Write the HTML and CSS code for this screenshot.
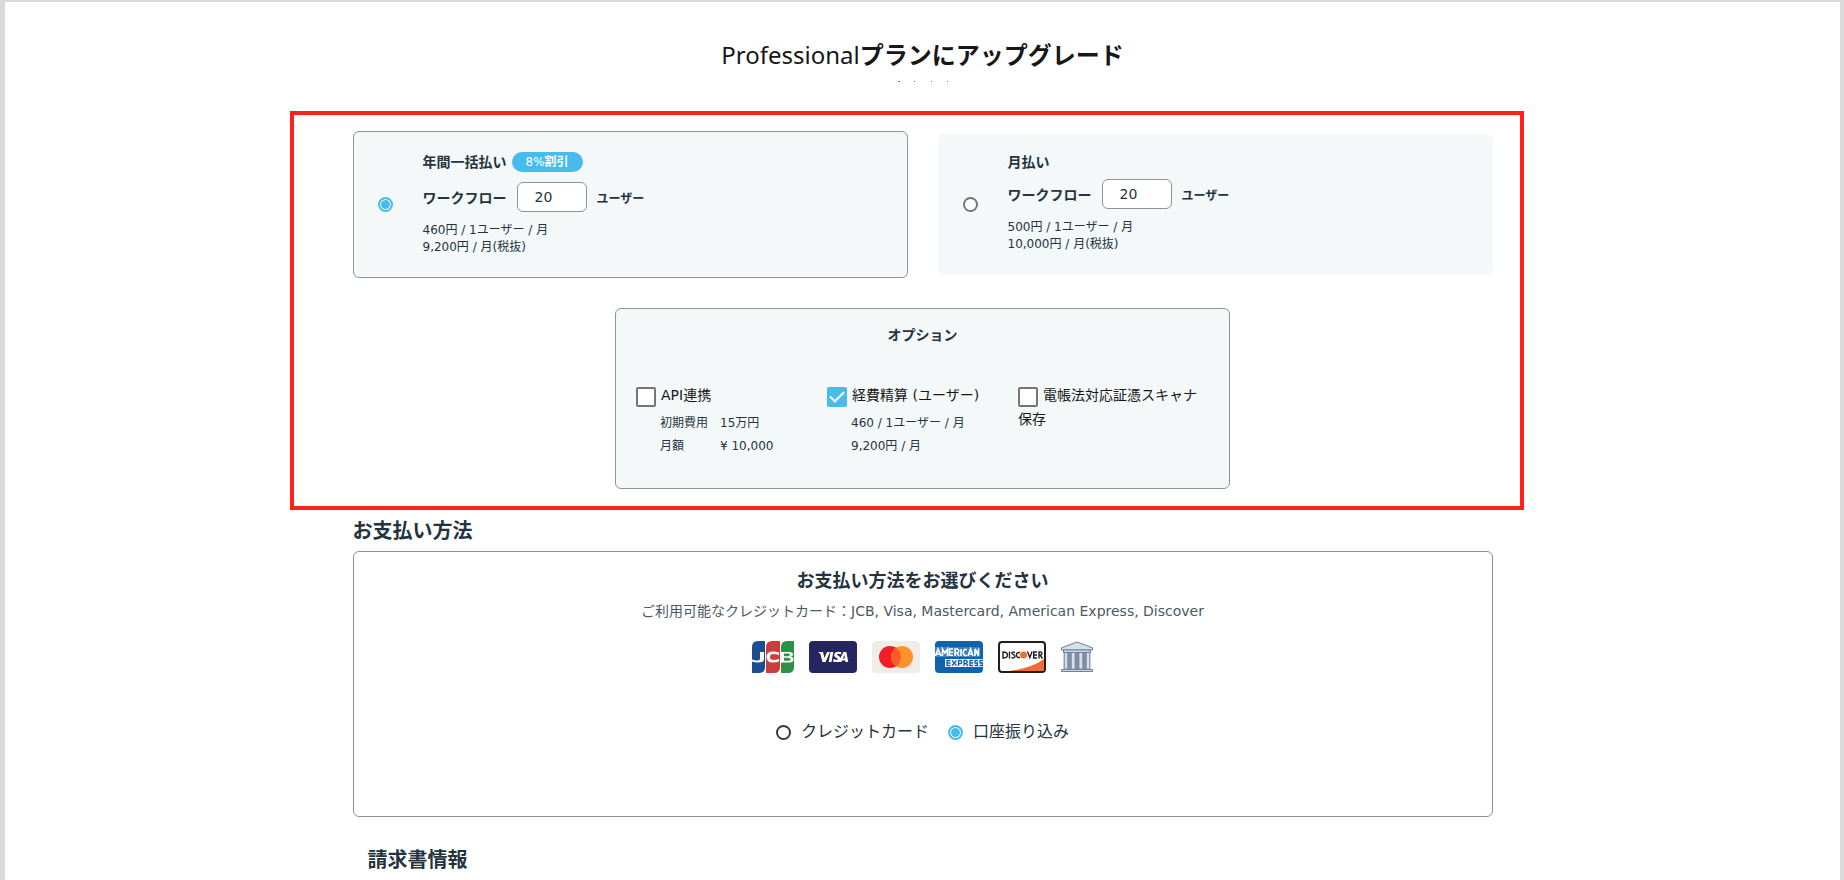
FILE: index.html
```html
<!DOCTYPE html>
<html lang="ja">
<head>
<meta charset="utf-8">
<title>Professionalプランにアップグレード</title>
<link rel="stylesheet" href="styles.css">
</head>
<body>
<main class="page">
  <form class="container">
    <h1 class="page-title"><span class="page-title-plan">Professional</span>プランにアップグレード</h1>
    <svg class="dots" width="50" height="2" viewBox="0 0 50 2" aria-hidden="true">
      <path d="M0 .5h2M16 .5h1M33 .5h1M49 .5h1" stroke="#777" stroke-width="1"/>
    </svg>

    <section class="plan-frame">
      <div class="plans">
        <div class="plan plan-selected">
          <input class="radio" type="radio" name="plan" id="plan-year" checked>
          <div class="plan-body">
            <div class="plan-name"><label for="plan-year">年間一括払い</label><span class="badge"><span class="badge-rate">8%</span>割引</span></div>
            <div class="plan-users">
              <label for="users-year">ワークフロー</label>
              <input class="count" type="text" id="users-year" value="20">
              <span class="unit">ユーザー</span>
            </div>
            <p class="price">460円 / 1ユーザー / 月<br>9,200円 / 月(税抜)</p>
          </div>
        </div>
        <div class="plan">
          <input class="radio" type="radio" name="plan" id="plan-month">
          <div class="plan-body">
            <div class="plan-name"><label for="plan-month">月払い</label></div>
            <div class="plan-users">
              <label for="users-month">ワークフロー</label>
              <input class="count" type="text" id="users-month" value="20">
              <span class="unit">ユーザー</span>
            </div>
            <p class="price">500円 / 1ユーザー / 月<br>10,000円 / 月(税抜)</p>
          </div>
        </div>
      </div>

      <div class="options">
        <h2 class="options-title">オプション</h2>
        <div class="options-grid">
          <div class="option">
            <input class="check" type="checkbox" id="opt-api"><label for="opt-api">API連携</label>
            <dl class="fees">
              <dt>初期費用</dt><dd>15万円</dd>
              <dt>月額</dt><dd>¥ 10,000</dd>
            </dl>
          </div>
          <div class="option">
            <input class="check" type="checkbox" id="opt-expense" checked><label for="opt-expense">経費精算 (ユーザー)</label>
            <p class="fee-text">460 / 1ユーザー / 月<br>9,200円 / 月</p>
          </div>
          <div class="option">
            <input class="check" type="checkbox" id="opt-scan"><label for="opt-scan">電帳法対応証憑スキャナ保存</label>
          </div>
        </div>
      </div>
    </section>

    <h2 class="section-title">お支払い方法</h2>
    <section class="payment">
      <h3 class="payment-title">お支払い方法をお選びください</h3>
      <p class="payment-note">ご利用可能なクレジットカード：JCB, Visa, Mastercard, American Express, Discover</p>
      <div class="brands">
        <svg width="42" height="32" viewBox="0 0 42 32" role="img" aria-label="JCB">
          <path d="M0 6q0-6 6-6h7v26q0 6-6 6H0z" fill="#1b4f8f"/>
          <path d="M14 6q0-6 6-6h8v26q0 6-6 6h-8z" fill="#cb3f3a"/>
          <path d="M29 6q0-6 6-6h7v26q0 6-6 6h-7z" fill="#2f9148"/>
          <path d="M8 11h4v7q0 3.500-6 3.500-4 0-6-1v-2q2.500 1 5 1 3 0 3-2zM27 14q-3-1-5.500-1-3.500 0-3.500 3t3.500 3q2.500 0 5.500-1v2.500q-3 1-6 1-6.500 0-6.500-5.500T21 10.500q3 0 6 1z" fill="#fff"/>
          <path fill-rule="evenodd" d="M29 11h8q4 0 4 2.500 0 2-2.500 2.300 3 .3 3 2.700 0 3-4 3H29zm3 1.500v2.700h4q2 0 2-1.400t-2-1.300zm0 4.200v3h4.500q2 0 2-1.500t-2-1.500z" fill="#fff"/>
        </svg>
        <svg width="48" height="32" viewBox="0 0 48 32" role="img" aria-label="Visa">
          <rect width="48" height="32" rx="4" fill="#25255f"/>
          <path d="M9 11h5l1.500 6 2.500-6h3l-4.500 10h-3l-2.200-8.200zM21.500 11h2.800l-1.800 10h-2.800zM32 13.300q-4-1.200-4 .3c0 1.200 3.500 1.400 3.500 4.100 0 3.800-5 3.800-7.500 2.700l.5-2.300q4 1.600 4.200-.1c0-1.200-3.500-1.300-3.500-4 0-3.500 4.500-3.800 7.200-2.700zM34.500 11h2.800l2 10h-2.700l-.3-1.500h-3.200l-.8 1.500h-3zm-.5 6.500h2l-.6-3.400z" fill="#fff"/>
        </svg>
        <svg width="48" height="32" viewBox="0 0 48 32" role="img" aria-label="Mastercard">
          <rect width="48" height="32" rx="4" fill="#eeede7"/>
          <circle cx="18" cy="16" r="11" fill="#f21d25"/>
          <circle cx="30" cy="16" r="11" fill="#ff922e"/>
          <path d="M24 6.800a11 11 0 0 1 0 18.400 11 11 0 0 1 0-18.400z" fill="#ff5a24"/>
        </svg>
        <svg width="48" height="32" viewBox="0 0 48 32" role="img" aria-label="American Express">
          <rect width="48" height="32" rx="4" fill="#0f62ac"/>
          <path d="M0 6h45v10H0z" fill="#fff" fill-opacity=".2"/>
          <path d="M10 18h38v8H10z" fill="#fff"/>
          <path fill="none" stroke="#fff" stroke-width="1.600" d="M.5 15 3 8l3 7M1.500 13h3M7.500 15V8l2.500 4 2.500-4v7M18 8h-3.500v6.300H18M14.500 11.300H18M20 15V8h2.500q2.500 2 0 4H20M22 12l2 3M26 8v7M32 8.500h-2.500q-2.500 3 0 6H32M33 15l2.500-7 2.500 7M34 13h3M40 15V8l3.500 6.500V7.500"/>
          <path fill="none" stroke="#0f62ac" stroke-width="1.300" d="M15.500 19.500H12v5h3.500M12 22h3.500M17 19.500l4.500 5M21.500 19.500l-4.500 5M23.500 25v-5.500H26q1.500 1.500 0 3h-2.500M29 25v-5.500h2.500q1.500 1.500 0 3H29M31 22.500l2 2.500M38 19.500h-3v5h3M35 22h3M43 19.500h-3v2.500h2.500v2.500h-3M48 19.500h-3v2.500h2.500v2.500h-3"/>
        </svg>
        <svg width="48" height="32" viewBox="0 0 48 32" role="img" aria-label="Discover">
          <rect x="1" y="1" width="46" height="30" rx="3" fill="#fff" stroke="#1e1e1e" stroke-width="2"/>
          <path d="M46 18v10q0 2-2 2H11q23-3 35-12z" fill="#f36c2f"/>
          <circle cx="25.500" cy="14" r="3.500" fill="#f36c2f"/>
          <path fill="none" stroke="#222" stroke-width="1.400" d="M5 11v6q4.500 0 4.500-3T5 11zM11.500 10.500v7M17 11.500q-3.500-1-3 1c.3 1 3 1 3 2.800 0 2-2.500 1.900-3.700 1.200M22 11.500q-3.500-.5-3.500 2.500t3.500 2.500M29.500 10.500l2.300 6 2.300-6M39 11h-3.300v6H39M35.700 14H39M41 17.500V11h2q2 1.500 0 3h-2M42.500 14.500l2 3"/>
        </svg>
        <svg width="32" height="32" viewBox="0 0 32 32" role="img" aria-label="銀行">
          <path d="M2 10h28v18H2z" fill="#c7d4de"/>
          <path d="M7 11h3v17H7zM14 11h4v17h-4zM22 11h3v17h-3z" fill="#7f8da7"/>
          <path d="M3.500 11h3v17h-3zM10.500 11h3.500v17h-3.500zM18 11h3.500v17H18zM25.500 11h3v17h-3z" fill="#d5e0e8" stroke="#74839c" stroke-width=".7"/>
          <path d="M.5 9V6.800L16 1l15.500 5.800V9z" fill="#d2e0e7" stroke="#718097"/>
          <path d="M2.500 9h27v2.500h-27zM.5 28.500h31v2H.5z" fill="#cbd8e0" stroke="#718097"/>
        </svg>
      </div>
      <div class="methods">
        <label class="method"><input class="radio radio-dark" type="radio" name="method">クレジットカード</label>
        <label class="method"><input class="radio radio-dark" type="radio" name="method" checked>口座振り込み</label>
      </div>
    </section>

    <h2 class="section-title invoice-title">請求書情報</h2>
  </form>
</main>
</body>
</html>
```
FILE: styles.css
```css
* {
  box-sizing: border-box;
}

body {
  margin: 0;
  background: #dadada;
  color: #24333e;
  font-family: "DejaVu Sans", "Noto Sans CJK JP", sans-serif;
  font-size: 14px;
}

h1, h2, h3, p, dl, dd {
  margin: 0;
}

.page {
  min-height: calc(100vh - 2px);
  margin: 2px 4px 0 5px;
  padding: 34px 16px 0;
  background: #fff;
}

.container {
  max-width: 1140px;
  margin: 0 auto;
}

.page-title {
  color: #171717;
  font-family: "Noto Sans CJK JP", sans-serif;
  font-size: 24px;
  line-height: 36px;
  text-align: center;
}

.page-title-plan {
  font-family: "Noto Sans", sans-serif;
  font-weight: 400;
}

.dots {
  display: block;
  margin: 8px auto 28px;
}

.plan-frame {
  margin: 0 -31px 0 -63px;
  padding: 16px 27px 17px 59px;
  border: 4px solid #ff221b;
}

.plans {
  display: grid;
  grid-template-columns: 1fr 1fr;
  align-items: center;
  gap: 30px;
}

.plan {
  display: flex;
  align-items: center;
  gap: 30px;
  padding: 20px 24px 21px;
  border: 1px solid transparent;
  border-radius: 6px;
  background: #f4f8f9;
}

.plan-selected {
  border-color: #8b969c;
}

.plan-name {
  display: flex;
  align-items: center;
  gap: 5px;
  font-weight: 700;
  line-height: 14px;
}

.badge {
  padding: 0 14px;
  border-radius: 10px;
  background: #47bcec;
  color: #fff;
  font-size: 12px;
  line-height: 20px;
}

.badge-rate {
  font-weight: 400;
}

.plan-users {
  display: flex;
  align-items: center;
  gap: 10px;
  margin: 10px 0;
  font-weight: 700;
}

.count {
  width: 70px;
  height: 30px;
  padding: 0 17px;
  border: 1px solid #8b969c;
  border-radius: 6px;
  background: #fff;
  color: inherit;
  font: inherit;
  font-weight: 400;
}

.unit {
  font-size: 12px;
}

.price {
  font-size: 12px;
  line-height: 17px;
}

.radio {
  appearance: none;
  flex: none;
  width: 15px;
  height: 15px;
  margin: 0;
  border: 2px solid #757575;
  border-radius: 50%;
  background: #fff;
}

.radio-dark {
  border-color: #3a3a3a;
}

.radio:checked {
  border-color: #47bcec;
  background: #47bcec;
  box-shadow: inset 0 0 0 1px #fff;
}

.options {
  max-width: 615px;
  margin: 30px auto 0;
  padding: 16px 20px 30px;
  border: 1px solid #8b969c;
  border-radius: 6px;
  background: #f4f8f9;
}

.options-title {
  font-size: 14px;
  line-height: 20px;
  text-align: center;
}

.options-grid {
  display: grid;
  grid-template-columns: repeat(3, 1fr);
  margin-top: 38px;
}

.option {
  color: #171717;
  line-height: 24px;
}

.check {
  appearance: none;
  display: inline-grid;
  place-items: center;
  width: 20px;
  height: 20px;
  margin: 4px 5px 0 0;
  border: 2px solid #757575;
  border-radius: 2px;
  background: #fff;
  vertical-align: top;
}

.check:checked {
  border-color: #47bcec;
  background: #47bcec;
}

.check:checked::after {
  content: "";
  width: 12px;
  height: 6px;
  margin-bottom: 4px;
  border: solid #fff;
  border-width: 0 0 2px 2px;
  transform: rotate(-45deg);
}

.fees,
.fee-text {
  margin: 5px 0 0 24px;
  color: #24333e;
  font-size: 12px;
  line-height: 23px;
}

.fees {
  display: grid;
  grid-template-columns: 60px 1fr;
}

.section-title {
  margin: 6px 0 5px;
  font-size: 20px;
  line-height: 30px;
}

.payment {
  padding: 15px 20px 71px;
  border: 1px solid #8b8f98;
  border-radius: 6px;
  text-align: center;
}

.payment-title {
  font-size: 18px;
  line-height: 28px;
}

.payment-note {
  margin-top: 4px;
  color: #4c5962;
  line-height: 24px;
}

.brands {
  display: flex;
  justify-content: center;
  gap: 15px;
  margin-top: 18px;
}

.methods {
  display: flex;
  justify-content: center;
  gap: 19px;
  margin-top: 46px;
  font-size: 16px;
  line-height: 26px;
}

.method {
  display: flex;
  align-items: center;
  gap: 10px;
}

.invoice-title {
  margin: 28px 0 0 15px;
}
```
